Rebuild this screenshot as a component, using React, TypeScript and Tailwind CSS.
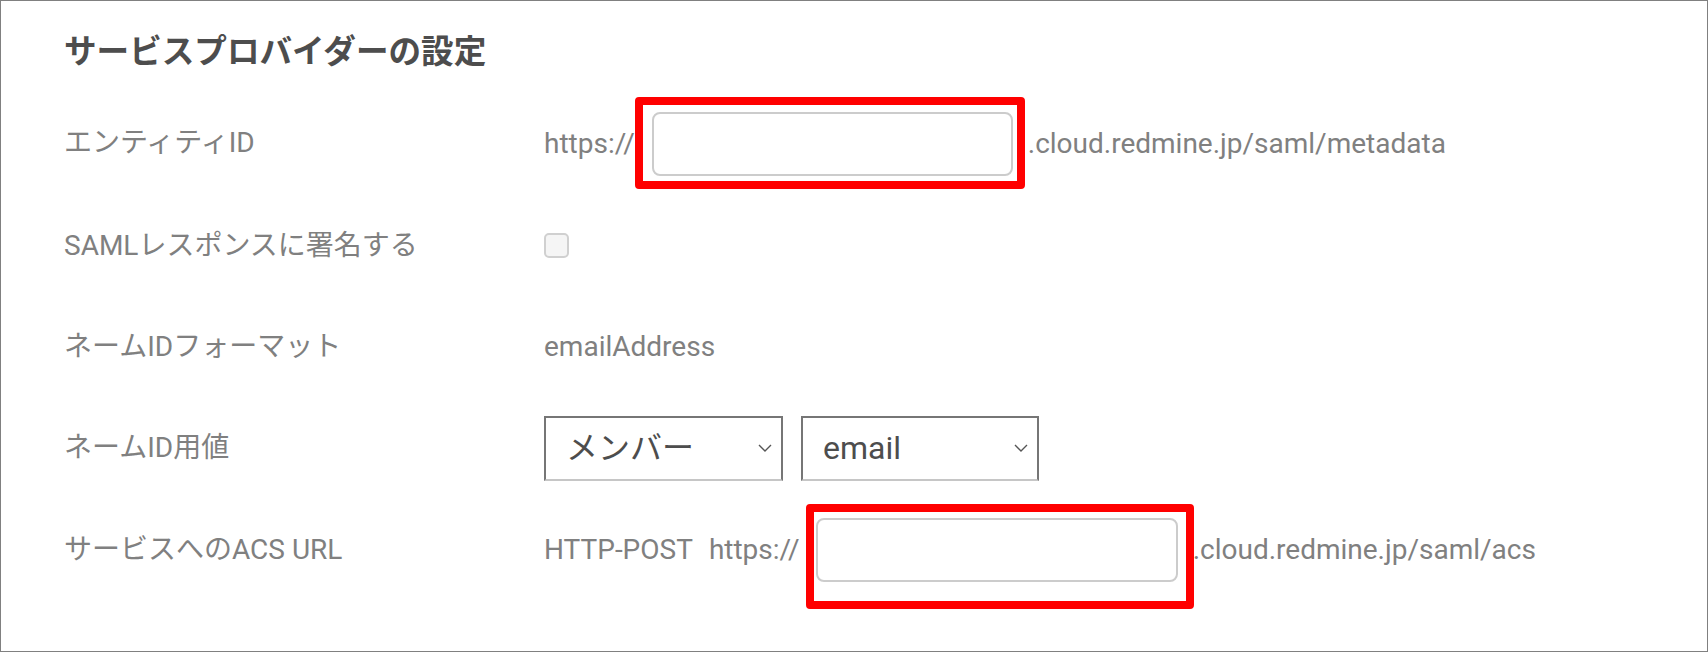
import React from "react";

const Chevron = () => (
  <svg width="14" height="9" viewBox="0 0 14 9" className="absolute right-[9px] top-1/2 -translate-y-1/2">
    <polyline points="1,1.5 7,7.5 13,1.5" fill="none" stroke="#555555" strokeWidth="1.4" />
  </svg>
);

const FakeSelect = ({ value, width }: { value: string; width: string }) => (
  <div
    className={`relative ${width} h-[65px] box-border border-2 border-[#767676] border-b-[#c6c6c6] bg-white flex items-center pl-[20px] text-[32px] text-[#4d4d4d]`}
  >
    <span>{value}</span>
    <Chevron />
  </div>
);

export default function App() {
  return (
    <div className="w-[1708px] h-[652px] box-border border border-[#808080] bg-white pl-[63px] font-['Roboto','Noto_Sans_CJK_JP',sans-serif] text-[28px] text-[#808080] overflow-hidden">
      <h2 className="mt-[31px] h-[40px] flex items-center text-[32.6px] font-bold text-[#4d4d4d]">
        サービスプロバイダーの設定
      </h2>

      {/* Row 1 */}
      <div className="mt-[39px] h-[66px] flex items-center">
        <div className="w-[480px] shrink-0 -mt-[2px]">エンティティID</div>
        <div className="flex items-center">
          <span>https://</span>
          <div className="relative ml-[17px]">
            <input
              type="text"
              className="block w-[361px] h-[64px] box-border border-2 border-[#cccccc] rounded-[8px] bg-white outline-none"
            />
            <div className="pointer-events-none absolute left-[-17px] right-[-12px] top-[-15px] bottom-[-13px] border-[8px] border-[#ff0000] rounded-[4px]" />
          </div>
          <span className="ml-[15px]">.cloud.redmine.jp/saml/metadata</span>
        </div>
      </div>

      {/* Row 2 */}
      <div className="mt-[36px] h-[66px] flex items-center">
        <div className="w-[480px] shrink-0">SAMLレスポンスに署名する</div>
        <div className="-mt-[2px] w-[25px] h-[25px] box-border border-2 border-[#d0d0d0] rounded-[5px] bg-[#f5f5f5]" />
      </div>

      {/* Row 3 */}
      <div className="mt-[35px] h-[66px] flex items-center">
        <div className="w-[480px] shrink-0">ネームIDフォーマット</div>
        <div>emailAddress</div>
      </div>

      {/* Row 4 */}
      <div className="mt-[35px] h-[66px] flex items-center">
        <div className="w-[480px] shrink-0">ネームID用値</div>
        <div className="flex items-center gap-[18px]">
          <FakeSelect value="メンバー" width="w-[239px]" />
          <FakeSelect value="email" width="w-[238px]" />
        </div>
      </div>

      {/* Row 5 */}
      <div className="mt-[36px] h-[66px] flex items-center">
        <div className="w-[480px] shrink-0">サービスへのACS URL</div>
        <div className="flex items-center">
          <span>HTTP-POST</span>
          <span className="ml-[16px]">https://</span>
          <div className="relative ml-[16px]">
            <input
              type="text"
              className="block w-[362px] h-[64px] box-border border-2 border-[#cccccc] rounded-[8px] bg-white outline-none"
            />
            <div className="pointer-events-none absolute left-[-10px] right-[-16px] top-[-14px] bottom-[-27px] border-[8px] border-[#ff0000] rounded-[4px]" />
          </div>
          <span className="ml-[15px]">.cloud.redmine.jp/saml/acs</span>
        </div>
      </div>
    </div>
  );
}
